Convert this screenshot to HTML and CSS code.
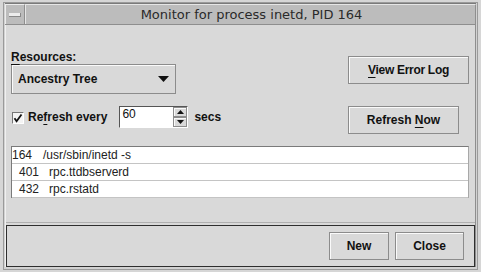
FILE: index.html
```html
<!DOCTYPE html>
<html>
<head>
<meta charset="utf-8">
<link rel="stylesheet" href="styles.css">
</head>
<body>
<div class="frame">
  <div class="titlebar">
    <div class="menubtn"><span class="dash"></span></div>
    <div class="title">Monitor for process inetd, PID 164</div>
  </div>
  <div class="client">
    <div class="content">
      <div class="row1">
        <div class="res">
          <div class="label"><u>R</u>esources:</div>
          <div class="combo">
            <span>Ancestry Tree</span>
            <svg class="arrow" width="11" height="6" viewBox="0 0 11 6"><path d="M0 0H11L5.5 6Z" fill="#111"/></svg>
          </div>
        </div>
        <div class="btn wide"><span><u>V</u>iew Error Log</span></div>
      </div>
      <div class="row2">
        <div class="refresh">
          <div class="check"><svg width="10" height="10" viewBox="0 0 10 10"><path d="M1.5 5.2L3.6 8.3L8.5 1.5" fill="none" stroke="#111" stroke-width="1.8"/></svg></div>
          <span class="rlabel">Re<u>f</u>resh every</span>
          <div class="spin">
            <span class="val">60</span>
            <div class="arrows">
              <div class="sb"><svg width="7" height="4" viewBox="0 0 7 4"><path d="M0 4H7L3.5 0Z" fill="#111"/></svg></div>
              <div class="sb"><svg width="7" height="4" viewBox="0 0 7 4"><path d="M0 0H7L3.5 4Z" fill="#111"/></svg></div>
            </div>
          </div>
          <span class="secs">secs</span>
        </div>
        <div class="btn now"><span>Refresh <u>N</u>ow</span></div>
      </div>
      <div class="list">
        <div class="item"><span class="pid0">164</span><span>/usr/sbin/inetd -s</span></div>
        <div class="item"><span class="pid1">401</span><span>rpc.ttdbserverd</span></div>
        <div class="item"><span class="pid1">432</span><span>rpc.rstatd</span></div>
      </div>
    </div>
    <div class="bottom">
      <div class="btn new"><span>New</span></div>
      <div class="btn close"><span>Close</span></div>
    </div>
  </div>
</div>
</body>
</html>
```
FILE: styles.css
```css
html, body {
  margin: 0;
  padding: 0;
}
body {
  width: 481px;
  height: 272px;
  background: #d6d6d6;
  font-family: "Liberation Sans", Arial, sans-serif;
  font-size: 12px;
  color: #111;
  overflow: hidden;
}
u {
  text-decoration: underline;
  text-underline-offset: 3px;
  text-decoration-thickness: 1px;
}
.frame {
  margin: 2px 0 0 3px;
  width: 475px;
  height: 268px;
  box-sizing: border-box;
  border: 1px solid #9a9a9a;
  display: flex;
  flex-direction: column;
  padding: 0 1px 2px 1px;
  background: #d2d2d2;
}
.titlebar {
  height: 22px;
  display: flex;
  background: #bcbcbc;
  border-top: 1px solid #7a7a7a;
  border-bottom: 1px solid #8e8e8e;
  box-sizing: border-box;
}
.menubtn {
  width: 20px;
  border-right: 1px solid #8e8e8e;
  border-left: 1px solid #ececec;
  border-top: 1px solid #ececec;
  display: flex;
  align-items: center;
  justify-content: center;
  box-sizing: border-box;
}
.dash {
  width: 11px;
  height: 3px;
  background: #ececec;
  border-bottom: 1px solid #888;
  border-right: 1px solid #888;
}
.title {
  flex: 1;
  text-align: center;
  font-family: "DejaVu Sans", sans-serif;
  font-size: 13px;
  line-height: 20px;
  color: #2a2a2a;
  border-top: 1px solid #e6e6e6;
  border-left: 1px solid #e6e6e6;
  border-right: 1px solid #8e8e8e;
  padding-left: 2px;
}
.client {
  flex: 1;
  display: flex;
  flex-direction: column;
  background: #d9d9d9;
  border-left: 1px solid #f0f0f0;
  border-right: 1px solid #8e8e8e;
}
.content {
  flex: 1;
  padding: 25px 6px 0 4px;
  border-bottom: 1px solid #b0b0b0;
  margin-bottom: 2px;
}
.row1 {
  display: flex;
  justify-content: space-between;
  align-items: flex-start;
  padding-left: 1px;
}
.label {
  font-weight: bold;
  line-height: 14px;
}
.combo {
  width: 165px;
  height: 30px;
  box-sizing: border-box;
  border: 1px solid #8c8c8c;
  box-shadow: inset 1px 1px #fafafa;
  display: flex;
  align-items: center;
  justify-content: space-between;
  padding: 0 6px 0 6px;
  font-weight: bold;
}
.btn {
  box-sizing: border-box;
  border: 1px solid #8c8c8c;
  box-shadow: inset 1px 1px #fafafa;
  height: 28px;
  display: flex;
  align-items: center;
  justify-content: center;
  font-weight: bold;
  background: #d9d9d9;
}
.wide {
  width: 121px;
  margin-top: 6px;
  letter-spacing: -0.3px;
}
.row2 {
  display: flex;
  justify-content: space-between;
  align-items: flex-start;
  margin-top: 12px;
}
.refresh {
  display: flex;
  align-items: center;
  height: 22px;
  padding-left: 2px;
}
.check {
  width: 12px;
  height: 12px;
  box-sizing: border-box;
  border: 1px solid #777;
  border-right-color: #fff;
  border-bottom-color: #fff;
  background: #f4f4f4;
  display: flex;
  align-items: center;
  justify-content: center;
  margin-top: 2px;
}
.rlabel {
  font-weight: bold;
  margin-left: 4px;
}
.spin {
  margin-left: 12px;
  width: 69px;
  height: 22px;
  box-sizing: border-box;
  border: 1px solid #555;
  border-right-color: #fff;
  border-bottom-color: #fff;
  background: #fff;
  display: flex;
  justify-content: space-between;
}
.val {
  padding-left: 2px;
  line-height: 14px;
}
.arrows {
  width: 14px;
  display: flex;
  flex-direction: column;
}
.sb {
  flex: 1;
  background: #d9d9d9;
  border: 1px solid #8c8c8c;
  box-shadow: inset 1px 1px #fafafa;
  display: flex;
  align-items: center;
  justify-content: center;
}
.secs {
  font-weight: bold;
  margin-left: 6px;
}
.now {
  width: 111px;
  margin-right: 10px;
}
.list {
  margin-top: 12px;
  margin-left: 1px;
  background: #fff;
  border-top: 1px solid #7a7a7a;
  border-left: 1px solid #7a7a7a;
  border-right: 1px solid #a8a8a8;
}
.item {
  height: 16px;
  line-height: 16px;
  border-bottom: 1px solid #c4c4c4;
  display: flex;
  color: #222;
}
.pid0 {
  width: 31px;
}
.pid1 {
  width: 30px;
  padding-left: 7px;
}
.bottom {
  height: 42px;
  box-sizing: border-box;
  border: 1px solid #2e2e2e;
  display: flex;
  justify-content: flex-end;
  align-items: flex-start;
  padding: 6px 10px 0 0;
  gap: 6px;
}
.new {
  width: 60px;
}
.close {
  width: 69px;
}
```
